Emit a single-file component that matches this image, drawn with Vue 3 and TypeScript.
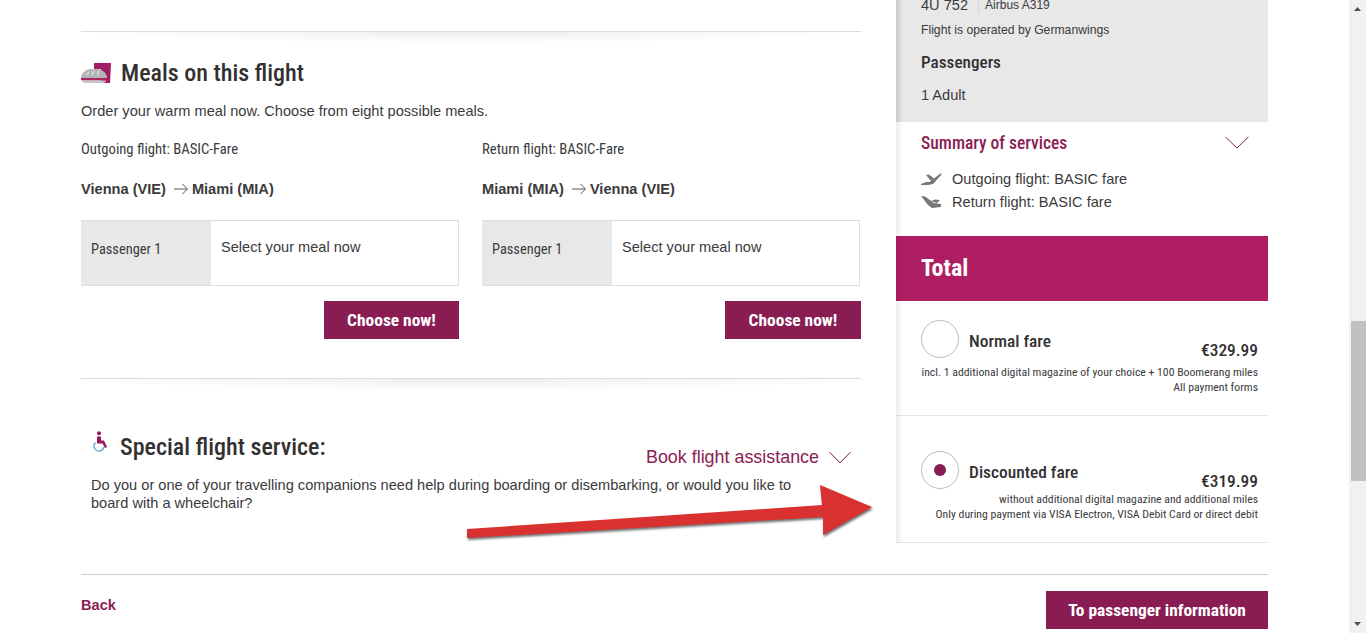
<script setup lang="ts">
interface Route { label: string; from: string; to: string }
const routes: Route[] = [
  { label: 'Outgoing flight: BASIC-Fare', from: 'Vienna (VIE)', to: 'Miami (MIA)' },
  { label: 'Return flight: BASIC-Fare', from: 'Miami (MIA)', to: 'Vienna (VIE)' },
]
</script>

<template>
  <div class="screen">
    <div class="viewport">
      <div class="page">
        <div class="columns">
          <main class="main">
            <div class="rule"></div>
            <div class="title-row">
              <svg class="meal-icon" width="30" height="20" viewBox="0 0 30 20">
                <path d="M13 0H30L29 20H20V6H13Z" fill="#a01c66" />
                <path d="M0 15C0 10 5 6 10 6H16C21 6 26 10 26 15Z" fill="#b5b5b5" />
                <path d="M8 9L6 12M13 8L11 12M18 8L16 12" stroke="#e4e4e4" stroke-width="1.2" fill="none" />
                <path d="M0 15H26V16.5C26 17 25 17.5 24 17.5H2C1 17.5 0 17 0 16.5Z" fill="#a8265f" />
                <path d="M1 17.5H25C25 19 23.5 20 22 20H4C2.5 20 1 19 1 17.5Z" fill="#c4c4c4" />
              </svg>
              <h2 class="h-large">Meals on this flight</h2>
            </div>
            <p class="lead">Order your warm meal now. Choose from eight possible meals.</p>
            <div class="routes">
              <section v-for="r in routes" :key="r.label" class="route">
                <div class="route-label">{{ r.label }}</div>
                <div class="route-line">
                  <span>{{ r.from }}</span>
                  <svg class="route-arrow" width="14" height="12" viewBox="0 0 14 12">
                    <path d="M0 6H13M8.5 1L13.5 6L8.5 11" fill="none" stroke="#555" stroke-width="1" />
                  </svg>
                  <span>{{ r.to }}</span>
                </div>
                <div class="meal-box">
                  <div class="meal-pax">Passenger 1</div>
                  <div class="meal-select">Select your meal now</div>
                </div>
                <div class="choose-row"><button class="btn choose">Choose now!</button></div>
              </section>
            </div>
            <div class="rule rule-second"></div>
            <div class="special-row">
              <svg class="chair-icon" width="16" height="21" viewBox="0 0 16 21">
                <path d="M3.5 11.5A5 5 0 1 0 11.9 16" fill="none" stroke="#5aa9de" stroke-width="1.4" />
                <circle cx="7" cy="2.3" r="2" fill="#97195c" />
                <path d="M5 5.5H9V9.5H12L15 16L13 17L10.5 12.5H5Z" fill="#97195c" />
              </svg>
              <h2 class="h-large">Special flight service:</h2>
              <div class="assist">
                <span>Book flight assistance</span>
                <svg width="22" height="13" viewBox="0 0 22 13">
                  <path d="M.5 1L11 12L21.5 1" fill="none" stroke="#8a1c54" stroke-width="1" />
                </svg>
              </div>
            </div>
            <p class="special-text">Do you or one of your travelling companions need help during boarding or disembarking, or would you like to board with a wheelchair?</p>
          </main>

          <aside class="side">
            <div class="side-grey">
              <div class="flight-row"><span class="flight-no">4U 752</span><span class="flight-type">Airbus A319</span></div>
              <div class="operated">Flight is operated by Germanwings</div>
              <div class="pax-title">Passengers</div>
              <div class="pax-text">1 Adult</div>
            </div>
            <div class="summary">
              <div class="summary-head">
                <span>Summary of services</span>
                <svg width="24" height="13" viewBox="0 0 24 13">
                  <path d="M.5 1L12 12L23.5 1" fill="none" stroke="#8a1c54" stroke-width="1" />
                </svg>
              </div>
              <div class="service first">
                <svg width="21" height="13" viewBox="0 0 21 13">
                  <path d="M0 11L5 9L8.5 9L20 0L20.5 1.5L12 11L7 12L0 12Z" fill="#777" />
                  <path d="M5 2L8 1.5L13 5.5L10 8Z" fill="#777" />
                </svg>
                <span>Outgoing flight: BASIC fare</span>
              </div>
              <div class="service second">
                <svg width="21" height="13" viewBox="0 0 21 13">
                  <path d="M0 0L4 .5L13 7L20 8L20 11L11 12L7 9Z" fill="#777" />
                  <path d="M10 5L14 3.5L19 4L16 7Z" fill="#777" />
                </svg>
                <span>Return flight: BASIC fare</span>
              </div>
            </div>
            <div class="total">Total</div>
            <div class="fare fare-normal">
              <div class="fare-head">
                <span class="radio"></span>
                <span class="fare-name">Normal fare</span>
                <span class="fare-price">€329.99</span>
              </div>
              <div class="fare-notes notes-normal">
                <div>incl. 1 additional digital magazine of your choice + 100 Boomerang miles</div>
                <div>All payment forms</div>
              </div>
            </div>
            <div class="fare fare-discount">
              <div class="fare-head">
                <span class="radio"><span class="radio-dot"></span></span>
                <span class="fare-name">Discounted fare</span>
                <span class="fare-price">€319.99</span>
              </div>
              <div class="fare-notes notes-discount">
                <div>without additional digital magazine and additional miles</div>
                <div>Only during payment via VISA Electron, VISA Debit Card or direct debit</div>
              </div>
            </div>
          </aside>
        </div>
        <footer class="footer">
          <a class="back">Back</a>
          <button class="btn next">To passenger information</button>
        </footer>
      </div>
    </div>
    <div class="scrollbar">
      <svg class="sb-arrow" width="7" height="4" viewBox="0 0 7 4"><path d="M0 4L3.5 0L7 4Z" fill="#505050" /></svg>
      <div class="sb-thumb"></div>
      <svg class="sb-arrow sb-bottom" width="7" height="4" viewBox="0 0 7 4"><path d="M0 0L3.5 4L7 0Z" fill="#505050" /></svg>
    </div>
    <svg class="red-arrow" width="420" height="70" viewBox="460 478 420 70">
      <path d="M467 529L822 505L820 485L872 507L823 535L823 517L467 538Z" fill="#d93030" />
    </svg>
  </div>
</template>

<style>
html, body { margin: 0; background: #fff; }
</style>

<style scoped>
.screen {
  position: relative;
  display: flex;
  width: 1366px;
  height: 633px;
  overflow: hidden;
  background: #fff;
  color: #3b3a3c;
  font-family: "Liberation Sans", Arial, sans-serif;
  font-size: 14.6px;
}
.viewport { flex: 1; min-width: 0; overflow: hidden; }
.page { width: 1187px; margin-left: 81px; }
.columns { display: flex; gap: 35px; height: 543px; }
.main { width: 780px; padding-top: 31px; }
.side { position: relative; width: 372px; height: 543px; }
.side::before {
  content: "";
  position: absolute;
  left: 0;
  top: 122px;
  bottom: 0;
  width: 7px;
  background: linear-gradient(to right, rgba(0,0,0,.07), rgba(0,0,0,0));
}

.rule {
  height: 12px;
  border-top: 1px solid #dcdcdc;
  box-sizing: border-box;
  background: radial-gradient(ellipse 50% 100% at 50% 0, rgba(0,0,0,.07), rgba(0,0,0,0));
}
.rule-second { margin-top: 39px; }

.title-row { display: flex; align-items: center; height: 30px; margin-top: 15px; }
.meal-icon { margin-right: 10px; flex: none; }
.h-large {
  margin: 0;
  font-family: Roboto, sans-serif;
  font-stretch: 75%;
  font-weight: 500;
  font-size: 24px;
  line-height: 30px;
  color: #333032;
}
.lead { margin: 13px 0 0; line-height: 20px; }

.routes { display: grid; grid-template-columns: 378px 379px; column-gap: 23px; margin-top: 18px; }
.route-label {
  font-family: Roboto, sans-serif;
  font-stretch: 75%;
  font-size: 14.7px;
  line-height: 21px;
}
.route-line { display: flex; align-items: center; height: 20px; margin-top: 19px; font-weight: 700; }
.route-arrow { margin: 0 4px 0 8px; }
.meal-box { display: flex; width: 378px; height: 66px; margin-top: 21px; box-sizing: border-box; border: 1px solid #dedede; border-left: 0; }
.meal-pax {
  width: 130px;
  flex: none;
  box-sizing: border-box;
  padding: 19px 0 0 10px;
  background: #e8e8e8;
  font-family: Roboto, sans-serif;
  font-stretch: 75%;
  font-size: 14.4px;
  line-height: 20px;
}
.meal-select { padding: 16px 0 0 10px; line-height: 20px; }
.choose-row { display: flex; justify-content: flex-end; margin-top: 15px; }
.btn {
  display: block;
  border: 0;
  padding: 0 0 1px;
  background: #8a1c54;
  color: #fff;
  font-family: Roboto, sans-serif;
  font-stretch: 75%;
  font-weight: 700;
  font-size: 17.4px;
  height: 38px;
}
.choose { width: 135px; }
.route:last-child .choose { width: 136px; }

.special-row { display: flex; align-items: flex-start; height: 35px; margin-top: 42px; padding-left: 11px; }
.chair-icon { flex: none; margin: -1px 12px 0 0; }
.assist {
  display: flex;
  align-items: center;
  gap: 10px;
  margin: 15px 10px 0 auto;
  height: 20px;
  font-size: 17.9px;
  color: #8a1c54;
}
.special-text { margin: 9px 0 0 10px; width: 720px; line-height: 18px; }

.side-grey {
  background: linear-gradient(to right, #c9c9c9, #e8e8e8 7px);
  padding: 0 25px 17px;
  height: 122px;
  box-sizing: border-box;
  overflow: hidden;
}
.flight-row { display: flex; align-items: center; height: 20px; margin-top: -5px; }
.flight-no { padding-right: 10px; border-right: 1px solid #d5d5d5; }
.flight-type { font-size: 12px; margin-left: 6px; }
.operated { margin-top: 5px; font-size: 12.2px; line-height: 20px; }
.pax-title {
  margin-top: 12px;
  font-family: Roboto, sans-serif;
  font-stretch: 75%;
  font-weight: 500;
  font-size: 17.2px;
  line-height: 20px;
  color: #333032;
}
.pax-text { margin-top: 13px; line-height: 20px; }
.summary { padding: 0 19px 0 25px; }
.summary-head {
  display: flex;
  justify-content: space-between;
  align-items: center;
  height: 21px;
  padding-top: 10px;
  font-family: Roboto, sans-serif;
  font-stretch: 75%;
  font-weight: 500;
  font-size: 17.5px;
  color: #8a1c54;
}
.service { display: flex; align-items: center; gap: 10px; height: 20px; }
.service.first { margin-top: 16px; }
.service.second { margin-top: 3px; }
.total {
  display: flex;
  align-items: center;
  height: 65px;
  box-sizing: border-box;
  padding: 0 0 1px 25px;
  margin-top: 24px;
  background: #af1e62;
  color: #fff;
  font-family: Roboto, sans-serif;
  font-stretch: 75%;
  font-size: 24px;
  font-weight: 700;
}
.fare { padding: 0 10px 20px 25px; border-bottom: 1px solid #e6e6e6; }
.fare-normal { padding-top: 19px; }
.fare-discount { padding-top: 35px; }
.fare-head { display: flex; align-items: flex-start; height: 38px; }
.radio {
  display: flex;
  align-items: center;
  justify-content: center;
  width: 38px;
  height: 38px;
  box-sizing: border-box;
  flex: none;
  border: 1px solid #bdbdbd;
  border-radius: 50%;
}
.radio-dot { width: 12px; height: 12px; border-radius: 50%; background: #8a1c54; }
.fare-name {
  margin: 11px 0 0 10px;
  font-family: Roboto, sans-serif;
  font-stretch: 75%;
  font-weight: 500;
  font-size: 17.4px;
  line-height: 20px;
  color: #333032;
}
.fare-price {
  margin: 20px 0 0 auto;
  font-family: Roboto, sans-serif;
  font-stretch: 75%;
  font-weight: 500;
  font-size: 17.4px;
  line-height: 20px;
  color: #333032;
}
.fare-notes {
  text-align: right;
  font-family: Roboto, sans-serif;
  font-stretch: 75%;
  font-size: 11.75px;
  line-height: 15px;
  white-space: nowrap;
}
.notes-normal { margin-top: 7px; }
.notes-discount { margin-top: 3px; }

.footer {
  display: flex;
  justify-content: space-between;
  align-items: flex-start;
  margin-top: 31px;
  padding-top: 16px;
  border-top: 1px solid #cfcfcf;
}
.back { margin-top: 4px; line-height: 20px; font-weight: 700; color: #8a1c54; }
.next { width: 222px; }

.scrollbar { display: flex; flex-direction: column; align-items: center; width: 17px; flex: none; background: #f1f1f1; }
.sb-arrow { margin-top: 7px; flex: none; }
.sb-thumb { width: 15px; height: 160px; margin: 310px 0 0 2px; background: #c1c1c1; flex: none; }
.sb-bottom { margin-top: auto; margin-bottom: 7px; }

.red-arrow {
  position: absolute;
  left: 460px;
  top: 478px;
  filter: drop-shadow(1px 2px 1px rgba(0,0,0,.55));
}
</style>
